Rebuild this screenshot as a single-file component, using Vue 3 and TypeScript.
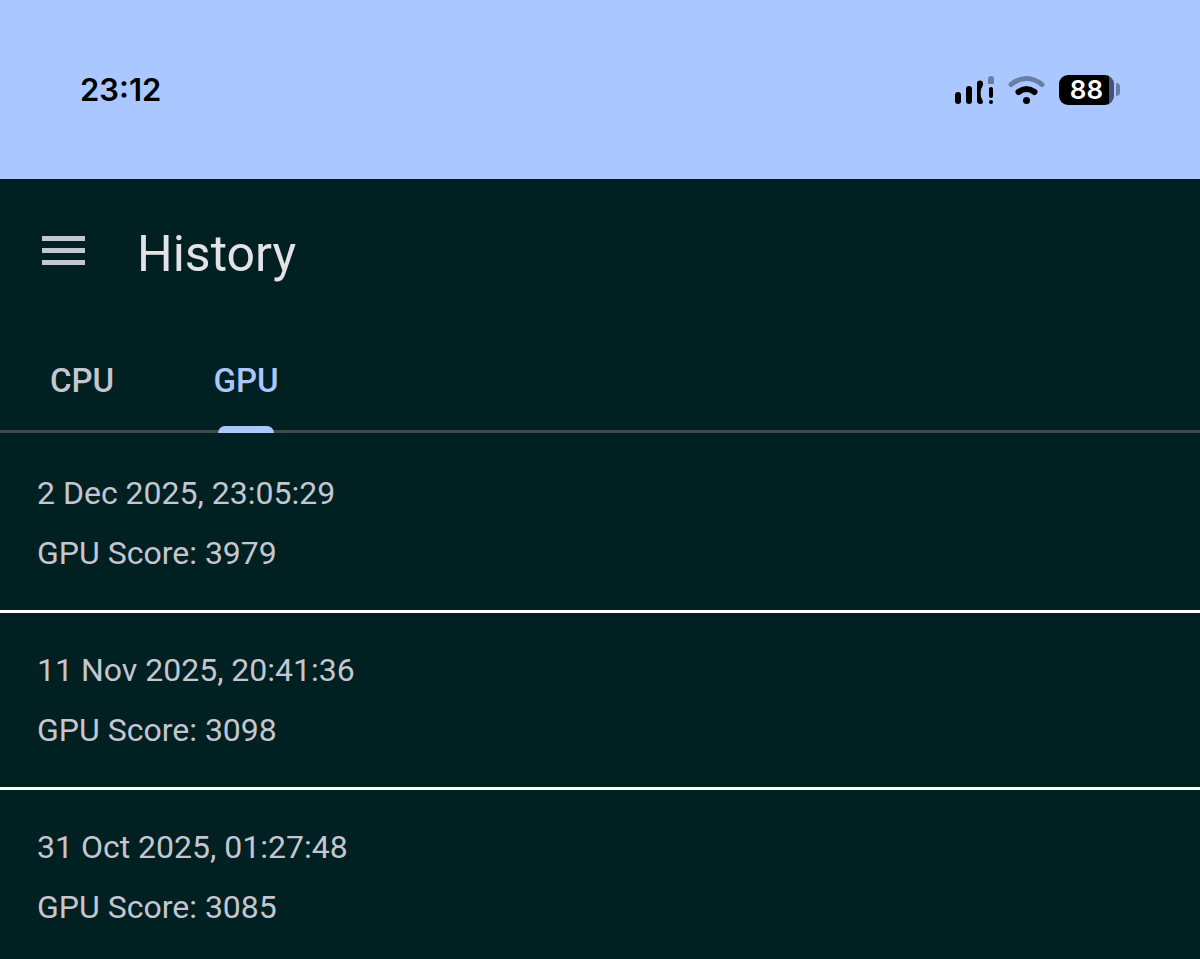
<script setup lang="ts">
import { computed, ref } from 'vue'

type Kind = 'CPU' | 'GPU'

interface Result {
  time: string
  score: number
}

const tabs: Kind[] = ['CPU', 'GPU']
const active = ref<Kind>('GPU')

const history: Record<Kind, Result[]> = {
  CPU: [],
  GPU: [
    { time: '2 Dec 2025, 23:05:29', score: 3979 },
    { time: '11 Nov 2025, 20:41:36', score: 3098 },
    { time: '31 Oct 2025, 01:27:48', score: 3085 },
  ],
}

const results = computed(() => history[active.value])
</script>

<template>
  <div class="screen">
    <div class="status">
      <time class="clock">23:12</time>
      <div class="indicators">
        <svg class="signal" width="39" height="30" viewBox="0 0 39 30" aria-label="Signal">
          <rect x="0" y="17" width="6" height="12" rx="3" />
          <rect x="11" y="11" width="6" height="18" rx="3" />
          <path d="M22 8.500a3 3 0 0 1 6 0v1.500q-5 8 0 16.500q0 2.500-2.500 2.500q-3.500 0-3.500-3z" />
          <path class="dim" d="M33 9V4a3 3 0 0 1 6 0v5z" />
          <rect x="34" y="12" width="4" height="11" rx="2" />
          <circle cx="36" cy="27" r="2" />
        </svg>
        <svg class="wifi" width="37" height="30" viewBox="0 0 37 30" aria-label="Wi-Fi">
          <path class="arc dim-arc" d="M3 9.500Q18.500-2.500 34 9.500" />
          <path class="arc inner-arc" d="M10.500 17Q18.500 11 26.500 17" />
          <circle cx="18.500" cy="25.500" r="3.500" />
        </svg>
        <div class="battery">
          <span class="cell">88</span>
          <span class="nub"></span>
        </div>
      </div>
    </div>

    <header class="bar">
      <button class="menu" type="button" aria-label="Menu">
        <svg width="43" height="29" viewBox="0 0 43 29">
          <path d="M0 0h43v5H0zM0 12h43v5H0zM0 24h43v5H0z" />
        </svg>
      </button>
      <h1>History</h1>
    </header>

    <nav class="tabs" role="tablist">
      <button
        v-for="tab in tabs"
        :key="tab"
        type="button"
        role="tab"
        class="tab"
        :class="{ active: tab === active }"
        :aria-selected="tab === active"
        @click="active = tab"
      >
        {{ tab }}
      </button>
    </nav>

    <ul class="list">
      <li v-for="item in results" :key="item.time" class="item">
        <p>{{ item.time }}</p>
        <p>{{ active }} Score: {{ item.score }}</p>
      </li>
    </ul>
  </div>
</template>

<style>
body {
  background: #002022;
}
</style>

<style scoped>
.screen {
  min-height: 100vh;
  background: #002022;
  color: #c5c6d0;
  font-family: Roboto, "Liberation Sans", sans-serif;
}

.status {
  display: flex;
  align-items: center;
  justify-content: space-between;
  height: 179px;
  padding: 0 80px;
  box-sizing: border-box;
  background: #aac7ff;
  color: #000;
}

.clock {
  font-family: Inter, sans-serif;
  font-size: 31px;
  font-weight: 600;
  line-height: 40px;
}

.indicators {
  display: flex;
  align-items: center;
  gap: 14px;
}

.dim {
  fill: #6a7da3;
}

.arc {
  fill: none;
  stroke: #000;
  stroke-width: 5;
  stroke-linecap: round;
}

.inner-arc {
  stroke-width: 6;
}

.dim-arc {
  stroke: #6a7da3;
}

.battery {
  display: flex;
  align-items: center;
  gap: 2px;
}

.cell {
  width: 55px;
  height: 30px;
  border-radius: 9px;
  background: linear-gradient(to right, #000 50px, #445277 50px);
  color: #fff;
  font-family: Inter, sans-serif;
  font-size: 26px;
  font-weight: 600;
  line-height: 30px;
  text-align: center;
}

.nub {
  width: 4px;
  height: 13px;
  border-radius: 0 4px 4px 0;
  background: #6a7da3;
}

.bar {
  display: flex;
  align-items: center;
  gap: 49px;
  height: 149px;
  padding: 0 42px;
}

.menu {
  display: flex;
  padding: 0 0 6px;
  border: 0;
  background: none;
  fill: #c5c6d0;
}

h1 {
  margin: 0;
  padding-left: 3px;
  color: #e3e2e6;
  font-size: 50px;
  font-weight: 400;
  line-height: 64px;
}

.tabs {
  display: flex;
  height: 105px;
  box-sizing: border-box;
  border-bottom: 3px solid #44474e;
}

.tab {
  position: relative;
  width: 164px;
  height: 105px;
  padding: 0;
  border: 0;
  background: none;
  color: #c5c6d0;
  font: 500 33px/105px Roboto, "Liberation Sans", sans-serif;
}

.tab.active {
  color: #aac7ff;
}

.tab.active::after {
  content: "";
  position: absolute;
  bottom: 0;
  left: 50%;
  width: 56px;
  height: 7px;
  margin-left: -28px;
  border-radius: 7px 7px 0 0;
  background: #aac7ff;
}

.list {
  margin: 0;
  padding: 3px 0 0;
  list-style: none;
}

.item {
  padding: 27px 37px;
}

.item + .item {
  border-top: 3px solid #fff;
}

.item p {
  margin: 0;
  font-size: 32px;
  line-height: 60px;
}
</style>
